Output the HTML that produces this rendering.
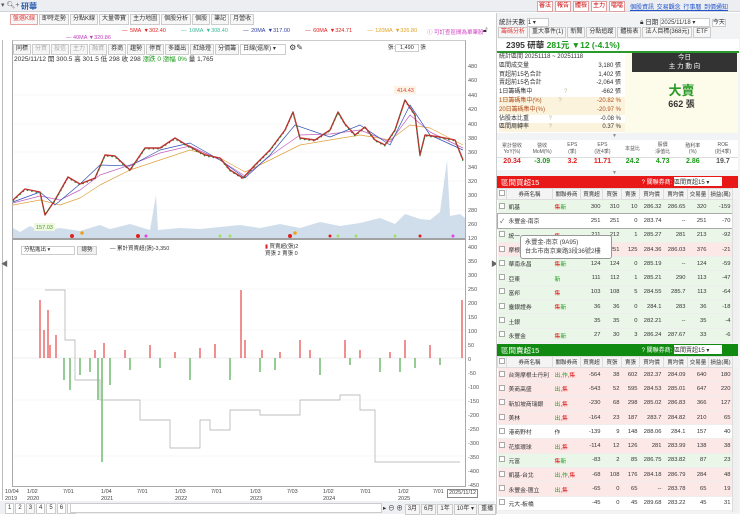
<!DOCTYPE html>
<html><head><meta charset="utf-8"><style>
*{margin:0;padding:0;box-sizing:border-box}
body{width:740px;height:514px;overflow:hidden;background:#fff;font-family:"Liberation Sans","Noto Sans CJK TC",sans-serif;font-size:7px;color:#333;position:relative}
.a{position:absolute}
.btn{position:absolute;border:1px solid #e0a0a0;background:#fff;color:#c00;font-size:6px;width:16px;text-align:center;height:11px;line-height:9px;top:1px;overflow:hidden;white-space:nowrap}
.tab{display:inline-block;border:1px solid #ccc;background:#f6f6f6;padding:0 2px;height:11px;line-height:9px;margin-right:1px;font-size:6px;white-space:nowrap}
table{border-collapse:collapse;width:100%;table-layout:fixed}
.t td{height:14.3px;font-size:5.8px;text-align:right;padding-right:2px;border-bottom:1px solid #eee;white-space:nowrap;overflow:hidden}
.t td:nth-child(1){text-align:center;padding:0}
.t td:nth-child(2){text-align:left;padding-left:2px}
.t td:nth-child(3){text-align:left;padding-left:2px}
.t tr.th td{height:11px;font-size:5.5px;text-align:center;background:#f4f4f4;border:1px solid #ddd;padding:0}
.g{background:#eaf6e8}.p{background:#fde8e8}
.r{color:#e02020}.gr{color:#1a9a1a}
.cb{display:inline-block;width:6px;height:6px;border:1px solid #aaa;background:#fff}
</style></head><body>
<div class="a" style="left:0;top:0;width:740px;height:12px;background:#eceef2;border-bottom:1px solid #d0d4da"></div>
<div class="a" style="left:1px;top:1px;font-size:7px;color:#555">▾ 🔍︎+</div>
<div class="a" style="left:21px;top:1px;font-size:8px;font-weight:bold;color:#2a5db0">研華</div>
<div class="btn" style="left:537px">審法</div><div class="btn" style="left:555px">報告</div><div class="btn" style="left:573px">體檢</div><div class="btn" style="left:591px">主力</div><div class="btn" style="left:609px">噹噹</div>
<div class="a" style="left:630px;top:2px;font-size:6px;color:#2255cc;text-decoration:underline;word-spacing:1px;white-space:nowrap">個股資訊 交易觀念 行事曆 到價通知</div>
<div class="a" style="left:10px;top:14px;white-space:nowrap"><span class="tab" style="color:#e04040;border-color:#e8a0a0">盤選K線</span><span class="tab">即時走勢</span><span class="tab">分點K線</span><span class="tab">大量帶寶</span><span class="tab">主力地圖</span><span class="tab">個股分析</span><span class="tab">個股</span><span class="tab">筆記</span><span class="tab">月營收</span></div>
<div class="a" style="left:122px;top:28px;font-size:5.5px;white-space:nowrap;word-spacing:1px"><span class="r">— 5MA ▼302.40</span> &nbsp;&nbsp;&nbsp;&nbsp; <span style="color:#3bb89a">— 10MA ▼308.40</span> &nbsp;&nbsp;&nbsp;&nbsp; <span style="color:#3040a0">— 20MA ▼317.00</span> &nbsp;&nbsp;&nbsp;&nbsp; <span class="r">— 60MA ▼324.71</span> &nbsp;&nbsp;&nbsp;&nbsp; <span style="color:#e0a020">— 120MA ▼326.80</span></div>
<div class="a" style="left:66px;top:35px;font-size:5.5px;color:#c040c0">— 40MA ▼320.86</div>
<div class="a" style="left:427px;top:28px;font-size:5.5px;color:#d040c0;white-space:nowrap">ⓘ 可訂查區間為單筆股</div>
<div class="a" style="left:483px;top:27px;font-size:7px">🔓︎</div>
<div class="a" style="left:12px;top:40px;width:454px;height:447px;border:1px solid #aaa;border-top-color:#ccc"></div>
<div class="a" style="left:2px;top:40px;width:3px;height:460px;border-left:1px solid #bbb"></div>
<div class="a" style="left:1px;top:259px;font-size:7px;color:#666">◀</div>
<div class="a" style="left:491px;top:259px;font-size:7px;color:#666">▶</div>
<div class="a" style="left:13px;top:43px;white-space:nowrap"><span class="tab">同標</span><span class="tab" style="color:#aaa">分買</span><span class="tab" style="color:#aaa">投信</span><span class="tab" style="color:#aaa">主力</span><span class="tab" style="color:#aaa">融資</span><span class="tab">券商</span><span class="tab">趨勢</span><span class="tab">停買</span><span class="tab">多鐵出</span><span class="tab">紅綠燈</span><span class="tab">分價籌</span><span class="tab" style="width:46px;background:#fff">日線(還原) ▾</span> <span style="font-size:8px">⚙✎</span></div>
<div class="a" style="left:388px;top:43px;font-size:5.5px;white-space:nowrap">張:<span style="border:1px solid #ccc;padding:0 4px">1,490</span> 張</div>
<div class="a" style="left:14px;top:53px;font-size:6.5px;white-space:nowrap">2025/11/12 開 300.5 高 301.5 低 298 收 298 <span class="gr">漲跌 0 漲幅 0%</span> 量 1,765</div>
<svg class="a" style="left:0;top:0" width="495" height="500">
<g stroke="#f0f0f0" stroke-width="0.6">
<line x1="13" y1="95" x2="465" y2="95"/><line x1="13" y1="124" x2="465" y2="124"/><line x1="13" y1="152" x2="465" y2="152"/><line x1="13" y1="181" x2="465" y2="181"/><line x1="13" y1="210" x2="465" y2="210"/>
<line x1="13" y1="289" x2="465" y2="289"/><line x1="13" y1="330" x2="465" y2="330"/><line x1="13" y1="400" x2="465" y2="400"/><line x1="13" y1="456" x2="465" y2="456"/>
</g>
<g fill="#c4d6e6" opacity="0.8">
<path d="M13 238 L13 228 L20 232 L30 226 L40 231 L60 228 L80 231 L100 225 L110 229 L130 224 L150 230 L156 195 L158 230 L180 228 L200 229 L220 227 L240 225 L260 228 L280 224 L300 228 L320 222 L340 226 L360 223 L380 218 L395 224 L405 214 L420 219 L430 220 L440 212 L447 160 L450 216 L460 214 L465 218 L465 238Z"/>
</g>
<g fill="none" stroke-linejoin="round">
<polyline stroke="#e0a040" stroke-width="0.7" points="13,205 40,200 60,205 80,198 100,185 130,170 160,160 190,150 220,158 245,172 270,160 300,145 330,140 360,135 390,140 410,125 430,128 463,145"/>
<polyline stroke="#c060c0" stroke-width="0.7" points="13,203 40,196 60,200 80,190 100,175 130,165 160,153 190,146 220,160 245,176 270,156 300,135 330,134 360,130 390,142 410,115 430,132 463,148"/>
<polyline stroke="#3050b0" stroke-width="0.7" points="13,202 40,192 55,205 80,184 100,165 130,166 160,150 190,143 220,160 245,178 270,155 295,125 330,137 360,125 390,145 410,105 430,135 463,150"/>
<polyline stroke="#c03030" stroke-width="1.4" points="13,200 25,189 40,192 45,215 55,200 68,177 80,184 95,178 105,155 115,156 130,170 145,148 160,148 175,138 185,144 205,155 220,158 230,170 243,178 255,165 270,150 285,130 293,112 300,138 315,140 330,130 338,112 345,124 355,135 365,127 375,140 385,145 395,130 405,100 415,115 420,155 425,135 440,137 455,140 463,160"/>
<polyline stroke="#2a7a2a" stroke-width="1" stroke-dasharray="1.5 3" points="13,201 25,190 40,193 45,214 55,201 68,178 80,185 95,179 105,156 115,157 130,171 145,149 160,149 175,139 185,145 205,156 220,159 230,171 243,179 255,166 270,151 285,131 293,113 300,139 315,141 330,131 338,113 345,125 355,136 365,128 375,141 385,146 395,131 405,101 415,116 420,156 425,136 440,138 455,141 463,161"/>
</g>
<g font-size="5.5" fill="#555" font-family="Liberation Sans">
<text x="468" y="68">480</text><text x="468" y="82">460</text><text x="468" y="97">440</text><text x="468" y="111">420</text><text x="468" y="126">400</text><text x="468" y="140">380</text><text x="468" y="154">360</text><text x="468" y="169">340</text><text x="468" y="183">320</text><text x="468" y="197">300</text><text x="468" y="212">280</text><text x="468" y="226">260</text><text x="468" y="240">120</text>
<text x="468" y="249">400</text><text x="468" y="263">350</text><text x="468" y="277">300</text><text x="468" y="291">250</text><text x="468" y="305">200</text><text x="468" y="319">150</text><text x="468" y="333">100</text><text x="468" y="347">50</text><text x="468" y="361">0</text><text x="468" y="375">-50</text><text x="468" y="389">-100</text><text x="468" y="403">-150</text><text x="468" y="417">-200</text><text x="468" y="431">-250</text><text x="468" y="445">-300</text><text x="468" y="459">-350</text><text x="468" y="473">-400</text><text x="468" y="487">-450</text>
</g>
<rect x="394" y="86" width="22" height="8" fill="#fdf3e3"/><text x="397" y="92" font-size="5.5" fill="#e04040">414.43</text>
<rect x="34" y="223" width="21" height="8" fill="#eef8e0"/><text x="36" y="229" font-size="5.5" fill="#4a9a2a">157.03</text>
<g fill="#e02020"><circle cx="72" cy="236" r="2"/><circle cx="138" cy="236" r="2"/><circle cx="290" cy="236" r="2"/><circle cx="330" cy="236" r="1.5"/><circle cx="420" cy="236" r="1.5"/></g>
<g fill="#a0e060"><circle cx="220" cy="236" r="1.5"/><circle cx="230" cy="236" r="1.5"/><circle cx="338" cy="236" r="1.5"/><circle cx="356" cy="236" r="1.5"/><circle cx="395" cy="236" r="1.5"/></g>
<circle cx="146" cy="236" r="1.5" fill="#e040e0"/><circle cx="453" cy="236" r="1.5" fill="#e040e0"/>
<circle cx="82" cy="233" r="1.8" fill="#f0a020"/><circle cx="295" cy="233" r="1.8" fill="#f0a020"/>
<line x1="13" y1="239" x2="465" y2="239" stroke="#444" stroke-width="1"/>
<line x1="13" y1="358" x2="465" y2="358" stroke="#ddd" stroke-width="0.6"/>
<g stroke="#e02020" stroke-width="1">
<path d="M40 358V300M44 358V330M48 358V310M50 358V345M56 358V335M95 358V350M104 358V343M125 358V350M150 358V345M175 358V352M200 358V348M215 358V344M241 358V290M245 358V340M262 358V350M280 358V352M300 358V340M310 358V350M345 358V340M360 358V350M390 358V352M405 358V340M430 358V345M462 358V300"/>
</g>
<g stroke="#2a9a2a" stroke-width="1">
<path d="M64 358V380M70 358V390M80 358V375M90 358V372M98 358V400M102 358V462M110 358V385M130 358V370M160 358V368M190 358V380M230 358V380M260 358V372M275 358V370M320 358V375M350 358V365M380 358V372M400 358V372M415 358V368M440 358V365"/>
</g>
<polyline fill="none" stroke="#aaa" stroke-width="0.7" points="45,290 65,290 65,340 75,340 75,380 100,380 100,400 140,400 140,420 170,420 170,448 200,448 200,420 210,420 210,430 230,430 230,410 260,410 260,415 300,415 300,400 340,400 340,395 360,395 360,410 375,410 375,462 440,462 460,462"/>
</svg>
<div class="a" style="left:21px;top:246px;width:54px;height:9px;border:1px solid #ccc;font-size:5.5px;padding-left:2px;line-height:7px">分點進出 ▾</div>
<div class="a" style="left:77px;top:246px;width:20px;height:9px;border:1px solid #ccc;background:#f0f0f0;font-size:5.5px;text-align:center;line-height:7px">總勢</div>
<div class="a" style="left:110px;top:244px;font-size:5.5px;white-space:nowrap">— 累計買賣超(張)-3,350</div>
<div class="a" style="left:265px;top:244px;font-size:5.5px;line-height:7px;white-space:nowrap"><span class="r">▮</span> 買賣超(張)2<br>買張 2 賣張 0</div>
<div class="a" style="left:5px;top:489px;font-size:5.5px;line-height:6.5px;color:#444;width:470px;height:12px">
<span class="a" style="left:0">10/04<br>2019</span><span class="a" style="left:22px">1/02<br>2020</span><span class="a" style="left:58px">7/01</span><span class="a" style="left:96px">1/04<br>2021</span><span class="a" style="left:132px">7/01</span><span class="a" style="left:170px">1/03<br>2022</span><span class="a" style="left:206px">7/01</span><span class="a" style="left:245px">1/03<br>2023</span><span class="a" style="left:282px">7/03</span><span class="a" style="left:318px">1/02<br>2024</span><span class="a" style="left:355px">7/01</span><span class="a" style="left:393px">1/02<br>2025</span><span class="a" style="left:428px">7/01</span><span class="a" style="left:442px;border:1px solid #888;padding:0 1px;background:#fff;white-space:nowrap">2025/11/12</span></div>
<div class="a" style="left:0;top:501px;width:495px;height:13px;background:#eef0f3"></div>
<div class="a" style="left:5px;top:503px;font-size:6.5px;white-space:nowrap"><span class="tab" style="background:#fff">1</span><span class="tab" style="background:#fff">2</span><span class="tab">3</span><span class="tab" style="background:#fff">4</span><span class="tab" style="background:#fff">5</span><span class="tab" style="background:#fff">6</span><span class="tab" style="background:#fff">▸</span></div>
<div class="a" style="left:70px;top:503px;width:312px;height:10px;border:1px solid #ccc;background:#fff"></div>
<div class="a" style="left:383px;top:502px;font-size:6.5px;white-space:nowrap">▸ ⊖ ⊕ <span class="tab">3月</span><span class="tab">6月</span><span class="tab">1年</span><span class="tab">10年 ▾</span><span class="tab">重播</span></div>
<!-- right panel -->
<div class="a" style="left:496px;top:13px;width:244px;height:501px;background:#f2f3f5;border-left:1px solid #ccc"></div>
<div class="a" style="left:499px;top:16px;font-size:6.5px;white-space:nowrap">統計天數 <span style="display:inline-block;width:22px;border:1px solid #ccc;background:#fff;font-size:6px">1 ▾</span></div>
<div class="a" style="left:640px;top:16px;font-size:6.5px;white-space:nowrap">🔒︎ 日期 <span style="display:inline-block;width:50px;border:1px solid #ccc;background:#fff;font-size:6px">2025/11/18 ▾</span> <span style="border:1px solid #ccc;background:#fff;font-size:6px">今天</span></div>
<div class="a" style="left:498px;top:27px;white-space:nowrap"><span class="tab" style="color:#e04040">籌碼分析</span><span class="tab">重大事件(1)</span><span class="tab">新聞</span><span class="tab">分點追蹤</span><span class="tab">體檢表</span><span class="tab">法人目標(368元)</span><span class="tab">ETF</span></div>
<div class="a" style="left:497px;top:39px;width:242px;height:14px;background:#fff;border-bottom:2px solid #2a9a2a;font-size:8.5px;line-height:12px;font-weight:bold;padding-left:9px;white-space:nowrap">2395 研華 <span class="gr">281元 ▼12 (-4.1%)</span></div>
<div class="a" style="left:497px;top:53px;width:128px;height:80px;background:#fff;font-size:6px;line-height:8.8px;padding-left:2px;white-space:nowrap">
<div>統計區間 20251118 ~ 20251118</div>
<div>區間成交量<span style="float:right;padding-right:4px">3,180 張</span></div>
<div>買超前15名合計<span style="float:right;padding-right:4px">1,402 張</span></div>
<div>賣超前15名合計<span style="float:right;padding-right:4px">-2,064 張</span></div>
<div>1日籌碼集中 <span style="color:#bb9;margin-left:30px">?</span><span style="float:right;padding-right:4px">-662 張</span></div>
<div style="background:#fcf3dc;color:#b05020">1日籌碼集中(%) <span style="color:#bb9;margin-left:15px">?</span><span style="float:right;padding-right:4px">-20.82 %</span></div>
<div style="background:#fcf3dc;color:#b05020">20日籌碼集中(%)<span style="float:right;padding-right:4px">-20.97 %</span></div>
<div>佔股本比重 <span style="color:#bb9;margin-left:18px">?</span><span style="float:right;padding-right:4px">-0.08 %</span></div>
<div style="background:#fcf3dc">區間周轉率 <span style="color:#bb9;margin-left:18px">?</span><span style="float:right;padding-right:4px">0.37 %</span></div>
</div>
<div class="a" style="left:625px;top:53px;width:113px;height:80px;background:#fdfbea"></div>
<div class="a" style="left:632px;top:53px;width:105px;height:19px;background:#333;color:#fff;font-size:6.5px;text-align:center;line-height:9px">今日<br>主 力 動 向</div>
<div class="a" style="left:625px;top:80px;width:113px;text-align:center;font-size:13px;font-weight:bold;color:#2a9a2a">大賣</div>
<div class="a" style="left:625px;top:97px;width:113px;text-align:center;font-size:9px;font-weight:bold">662 張</div>
<div class="a" style="left:612px;top:133px;font-size:5px;color:#888">▼</div>
<div class="a" style="left:497px;top:140px;width:241px;height:30px;background:#fff;font-size:5px;color:#555">
<table style="text-align:center"><tr style="height:17px;border-bottom:1px solid #ddd"><td>累計營收<br>YoY(%)</td><td>營收<br>MoM(%)</td><td>EPS<br>(季)</td><td>EPS<br>(近4季)</td><td>本益比</td><td>股價<br>淨值比</td><td>殖利率<br>(%)</td><td>ROE<br>(近4季)</td></tr>
<tr style="font-size:7px;font-weight:bold"><td class="r">20.34</td><td class="gr">-3.09</td><td class="r">3.2</td><td class="r">11.71</td><td class="gr">24.2</td><td class="gr">4.73</td><td class="gr">2.86</td><td>19.7</td></tr></table></div>
<div class="a" style="left:612px;top:170px;font-size:5px;color:#888">▼</div>
<div class="a" style="left:497px;top:176px;width:241px;height:12px;background:#e81818;color:#fff;font-size:7.5px;padding:1px 0 0 4px;white-space:nowrap">區間買超15<span style="float:right;font-size:6px;padding-right:16px">? 關聯券商: <span style="background:#fff;color:#333;display:inline-block;width:48px">區間買超15 ▾</span></span></div>
<div class="a" style="left:497px;top:188px;width:235px;background:#fff">
<table class="t"><colgroup><col style="width:9px"><col style="width:46px"><col style="width:28px"><col style="width:22px"><col style="width:19px"><col style="width:18px"><col style="width:24px"><col style="width:24px"><col style="width:21px"><col style="width:24px"></colgroup>
<tr class="th"><td><span class="cb"></span></td><td>券商名稱</td><td>關聯券商</td><td>買賣超</td><td>買張</td><td>賣張</td><td>買均價</td><td>賣均價</td><td>交易量</td><td>損益(萬)</td></tr>
<tr class="g"><td><span class="cb"></span></td><td>凱基</td><td><span class="r">集</span><span class="gr">新</span></td><td>300</td><td>310</td><td>10</td><td>286.32</td><td>286.65</td><td>320</td><td>-159</td></tr>
<tr style="outline:1px solid #aaa"><td>✓</td><td>永豐金-南京</td><td></td><td>251</td><td>251</td><td>0</td><td>283.74</td><td>--</td><td>251</td><td>-70</td></tr>
<tr class="g"><td><span class="cb"></span></td><td>統一</td><td><span class="r">集</span></td><td>211</td><td>212</td><td>1</td><td>285.27</td><td>281</td><td>213</td><td>-92</td></tr>
<tr class="p"><td><span class="cb"></span></td><td>摩根</td><td></td><td>126</td><td>251</td><td>125</td><td>284.36</td><td>286.03</td><td>376</td><td>-21</td></tr>
<tr class="g"><td><span class="cb"></span></td><td>華南永昌</td><td><span class="r">集</span><span class="gr">新</span></td><td>124</td><td>124</td><td>0</td><td>285.19</td><td>--</td><td>124</td><td>-59</td></tr>
<tr class="g"><td><span class="cb"></span></td><td>亞東</td><td><span class="gr">新</span></td><td>111</td><td>112</td><td>1</td><td>285.21</td><td>290</td><td>113</td><td>-47</td></tr>
<tr class="g"><td><span class="cb"></span></td><td>富邦</td><td><span class="r">集</span></td><td>103</td><td>108</td><td>5</td><td>284.55</td><td>285.7</td><td>113</td><td>-64</td></tr>
<tr class="g"><td><span class="cb"></span></td><td>臺銀證券</td><td><span class="r">集</span><span class="gr">新</span></td><td>36</td><td>36</td><td>0</td><td>284.1</td><td>283</td><td>36</td><td>-18</td></tr>
<tr class="g"><td><span class="cb"></span></td><td>土銀</td><td></td><td>35</td><td>35</td><td>0</td><td>282.21</td><td>--</td><td>35</td><td>-4</td></tr>
<tr class="g"><td><span class="cb"></span></td><td>永豐金</td><td><span class="r">集</span><span class="gr">新</span></td><td>27</td><td>30</td><td>3</td><td>286.24</td><td>287.67</td><td>33</td><td>-6</td></tr></table></div>
<div class="a" style="left:732px;top:199px;width:6px;height:143px;background:#f0f0f0;border-left:1px solid #ddd"></div>
<div class="a" style="left:520px;top:235px;width:92px;height:24px;background:#fff;border:1px solid #999;border-radius:3px;font-size:6.2px;line-height:9px;padding:2px 4px;color:#444;white-space:nowrap">永豐金-南京 (9A95)<br>台北市南京東路3段36號2樓</div>
<div class="a" style="left:497px;top:344px;width:241px;height:12px;background:#108a10;color:#fff;font-size:7.5px;padding:1px 0 0 4px;white-space:nowrap">區間賣超15<span style="float:right;font-size:6px;padding-right:16px">? 關聯券商: <span style="background:#fff;color:#333;display:inline-block;width:48px">區間賣超15 ▾</span></span></div>
<div class="a" style="left:497px;top:356px;width:235px;background:#fff">
<table class="t"><colgroup><col style="width:9px"><col style="width:46px"><col style="width:28px"><col style="width:22px"><col style="width:19px"><col style="width:18px"><col style="width:24px"><col style="width:24px"><col style="width:21px"><col style="width:24px"></colgroup>
<tr class="th"><td><span class="cb"></span></td><td>券商名稱</td><td>關聯券商</td><td>買賣超</td><td>買張</td><td>賣張</td><td>買均價</td><td>賣均價</td><td>交易量</td><td>損益(萬)</td></tr>
<tr class="p"><td><span class="cb"></span></td><td>台灣摩根士丹利</td><td><span class="gr">出</span>,<span class="gr">作</span>,<span class="r">集</span></td><td>-564</td><td>38</td><td>602</td><td>282.37</td><td>284.09</td><td>640</td><td>180</td></tr>
<tr class="p"><td><span class="cb"></span></td><td>美商高盛</td><td><span class="gr">出</span>,<span class="r">集</span></td><td>-543</td><td>52</td><td>595</td><td>284.53</td><td>285.01</td><td>647</td><td>220</td></tr>
<tr class="p"><td><span class="cb"></span></td><td>新加坡商瑞銀</td><td><span class="gr">出</span>,<span class="r">集</span></td><td>-230</td><td>68</td><td>298</td><td>285.02</td><td>286.83</td><td>366</td><td>127</td></tr>
<tr class="p"><td><span class="cb"></span></td><td>美林</td><td><span class="gr">出</span>,<span class="r">集</span></td><td>-164</td><td>23</td><td>187</td><td>283.7</td><td>284.82</td><td>210</td><td>65</td></tr>
<tr><td><span class="cb"></span></td><td>港商野村</td><td>作</td><td>-139</td><td>9</td><td>148</td><td>288.06</td><td>284.1</td><td>157</td><td>40</td></tr>
<tr class="p"><td><span class="cb"></span></td><td>花旗環球</td><td><span class="gr">出</span>,<span class="r">集</span></td><td>-114</td><td>12</td><td>126</td><td>281</td><td>283.99</td><td>138</td><td>38</td></tr>
<tr class="g"><td><span class="cb"></span></td><td>元富</td><td><span class="r">集</span><span class="gr">新</span></td><td>-83</td><td>2</td><td>85</td><td>286.75</td><td>283.82</td><td>87</td><td>23</td></tr>
<tr class="p"><td><span class="cb"></span></td><td>凱基-台北</td><td><span class="gr">出</span>,<span class="gr">作</span>,<span class="r">集</span></td><td>-68</td><td>108</td><td>176</td><td>284.18</td><td>286.79</td><td>284</td><td>48</td></tr>
<tr class="p"><td><span class="cb"></span></td><td>永豐金-匯立</td><td><span class="gr">出</span>,<span class="r">集</span></td><td>-65</td><td>0</td><td>65</td><td>--</td><td>283.78</td><td>65</td><td>19</td></tr>
<tr><td><span class="cb"></span></td><td>元大-板橋</td><td></td><td>-45</td><td>0</td><td>45</td><td>289.68</td><td>283.22</td><td>45</td><td>31</td></tr></table></div>
<div class="a" style="left:732px;top:368px;width:6px;height:144px;background:#f0f0f0;border-left:1px solid #ddd"></div>
</body></html>
